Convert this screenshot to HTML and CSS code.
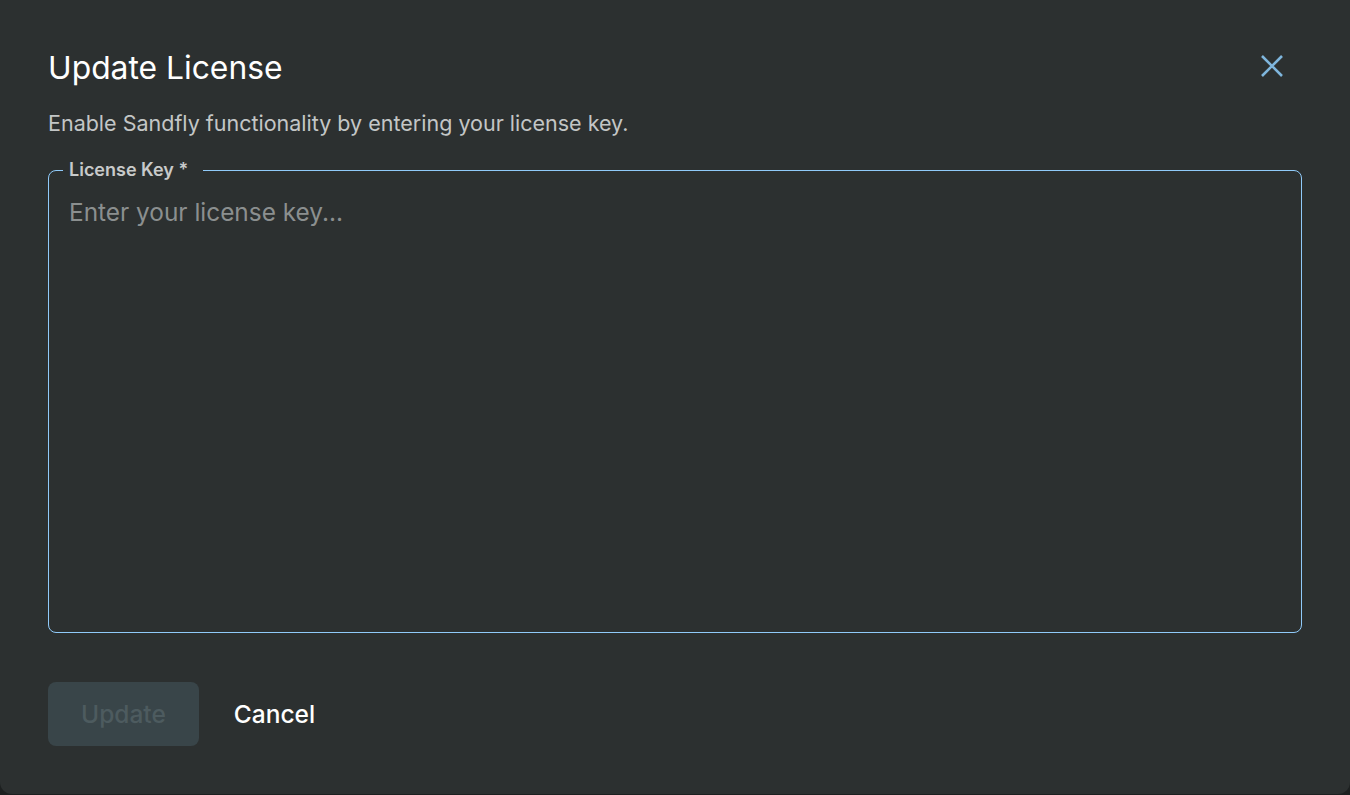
FILE: index.html
```html
<!DOCTYPE html>
<html>
<head>
<meta charset="utf-8">
<link rel="stylesheet" href="styles.css">
</head>
<body>
<div class="dialog">
  <div class="header">
    <h1 class="title">Update License</h1>
    <button class="close" aria-label="Close">
      <svg width="24" height="24" viewBox="0 0 24 24"><path d="M2 2 L22 22 M22 2 L2 22" stroke="#7fb6dd" stroke-width="2.6" stroke-linecap="butt" fill="none"/></svg>
    </button>
  </div>
  <p class="subtitle">Enable Sandfly functionality by entering your license key.</p>
  <fieldset class="field">
    <legend class="legend">License Key *</legend>
    <textarea class="input" placeholder="Enter your license key..."></textarea>
  </fieldset>
  <div class="actions">
    <button class="btn btn-primary" disabled>Update</button>
    <button class="btn btn-text">Cancel</button>
  </div>
</div>
</body>
</html>
```

FILE: styles.css
```css
html, body {
  margin: 0;
  padding: 0;
  background: #1d2020;
  height: 100%;
  overflow: hidden;
}
body {
  font-family: Inter, "Noto Sans", sans-serif;
}
.dialog {
  box-sizing: border-box;
  width: 1350px;
  height: 794px;
  background: #2c3030;
  border-radius: 0 0 12px 12px;
  padding: 44px 48px 0 48px;
  display: flex;
  flex-direction: column;
}
.header {
  display: flex;
  justify-content: space-between;
  align-items: center;
}
.title {
  margin: 0;
  font-size: 31.8px;
  font-weight: 400;
  color: #ffffff;
  line-height: 48px;
}
.close {
  background: none;
  border: none;
  padding: 0;
  margin: -4px 18px 0 0;
  width: 24px;
  height: 24px;
  display: flex;
  cursor: pointer;
}
.subtitle {
  margin: 15px 0 0 0;
  font-size: 21.5px;
  line-height: 32px;
  color: #c3c6c6;
}
.field {
  margin: 20px 0 0 0;
  padding: 0 20px;
  border: 1px solid #90caf9;
  border-radius: 8px;
  height: 474px;
  box-sizing: border-box;
  min-width: 0;
}
.legend {
  margin-left: -6px;
  padding: 0 15px 0 6px;
  font-size: 18px;
  font-weight: 600;
  color: #c8caca;
  line-height: 22px;
}
.input {
  display: block;
  width: 100%;
  height: 400px;
  background: transparent;
  border: none;
  outline: none;
  resize: none;
  padding: 0;
  margin-top: 15px;
  font-family: Inter, "Noto Sans", sans-serif;
  font-size: 24.4px;
  line-height: 32px;
  color: #ffffff;
}
.input::placeholder {
  color: #8b8f8f;
}
.actions {
  margin-top: 49px;
  display: flex;
  align-items: center;
  gap: 19px;
}
.btn {
  font-family: Inter, "Noto Sans", sans-serif;
  font-size: 24.5px;
  font-weight: 500;
  border: none;
  border-radius: 8px;
  height: 64px;
  padding: 0 33px;
  background: none;
}
.btn-primary {
  background: #394549;
  color: #4d5b5f;
}
.btn-text {
  color: #ffffff;
  padding: 0 16px;
}
```
